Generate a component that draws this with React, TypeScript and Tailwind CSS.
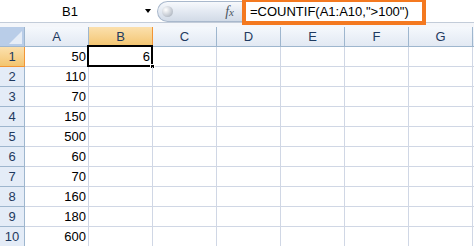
import React from "react";

const cols = ["A", "B", "C", "D", "E", "F", "G"];
const values = [50, 110, 70, 150, 500, 60, 70, 160, 180, 600];

export default function App() {
  return (
    <div className="w-[474px] h-[246px] overflow-hidden bg-white font-['Liberation_Sans',Arial,sans-serif] text-[13px] text-black">
      {/* Formula bar */}
      <div className="flex h-[27px] bg-[#f4f6fa]">
        <div className="relative flex h-[23px] w-[157px] items-center border-b border-[#c3ccd9] bg-white">
          <span className="w-[140px] pt-[1px] text-center">B1</span>
          <span className="ml-[5px] h-0 w-0 border-x-[3px] border-t-[4px] border-x-transparent border-t-black" />
        </div>
        <div className="h-[23px] w-[85px] border-b border-[#c3ccd9] bg-white pt-[1px]">
          <div className="flex h-[21px] items-center justify-between rounded-l-full border border-r-0 border-[#a9b8cc] bg-gradient-to-b from-[#f7f9fc] via-[#e3e9f2] to-[#d2dbe7] pl-[4px] pr-[8px]">
            <span className="h-[11px] w-[11px] rounded-full bg-[radial-gradient(circle_at_35%_35%,#ffffff,#c9ced6_55%,#9aa3ae)]" />
            <span className="font-['Liberation_Serif',serif] text-[14px] italic leading-none text-[#4b5563]">
              f<span className="text-[11px]">x</span>
            </span>
          </div>
        </div>
        <div className="-mt-[2px] flex h-[27px] w-[184px] items-center border-4 border-[#f47920] bg-white pl-[4px] pt-[1px]">
          =COUNTIF(A1:A10,"&gt;100")
        </div>
        <div className="h-[23px] flex-1 border-b border-[#c3ccd9] bg-white" />
      </div>

      {/* Sheet */}
      <div className="grid grid-cols-[25px_repeat(7,64px)_1fr]">
        {/* Header row */}
        <div className="relative h-[20px] border-b border-r border-[#9eb6ce] bg-[#b9cde8]">
          <span className="absolute bottom-[2px] right-[2px] h-0 w-0 border-b-[13px] border-l-[13px] border-b-[#e6edf7] border-l-transparent" />
        </div>
        {cols.map((c) => (
          <div
            key={c}
            className={
              c === "B"
                ? "flex h-[20px] items-center justify-center border-b border-r border-[#f29536] bg-gradient-to-b from-[#fbe0ad] to-[#f3c56f] text-[#1f3a60]"
                : "flex h-[20px] items-center justify-center border-b border-r border-[#9eb6ce] bg-gradient-to-b from-[#f5f8fc] to-[#e2e9f3] text-[#1f3a60]"
            }
          >
            {c}
          </div>
        ))}
        <div className="h-[20px] border-b border-[#9eb6ce] bg-gradient-to-b from-[#f5f8fc] to-[#e2e9f3]" />

        {/* Data rows */}
        {values.map((v, i) => (
          <React.Fragment key={i}>
            <div
              className={
                i === 0
                  ? "flex h-[20px] items-center justify-center border-b border-r border-[#f29536] bg-gradient-to-b from-[#fbe0ad] to-[#f3c56f] text-[#1f3a60]"
                  : "flex h-[20px] items-center justify-center border-b border-r border-[#9eb6ce] bg-[#e4ecf7] text-[#1f3a60]"
              }
            >
              {i + 1}
            </div>
            <div className="flex h-[20px] items-center justify-end border-b border-r border-[#d0d7e5] pr-[2px]">{v}</div>
            <div className="relative flex h-[20px] items-center justify-end border-b border-r border-[#d0d7e5] pr-[2px]">
              {i === 0 && (
                <>
                  <span className="relative z-10">6</span>
                  <span className="absolute -left-[2px] -top-[2px] h-[22px] w-[66px] border-2 border-black" />
                  <span className="absolute -bottom-[3px] -right-[3px] h-[5px] w-[5px] border border-white bg-black" />
                </>
              )}
            </div>
            {cols.slice(2).map((c) => (
              <div key={c} className="h-[20px] border-b border-r border-[#d0d7e5]" />
            ))}
            <div className="h-[20px] border-b border-[#d0d7e5]" />
          </React.Fragment>
        ))}
      </div>
    </div>
  );
}
